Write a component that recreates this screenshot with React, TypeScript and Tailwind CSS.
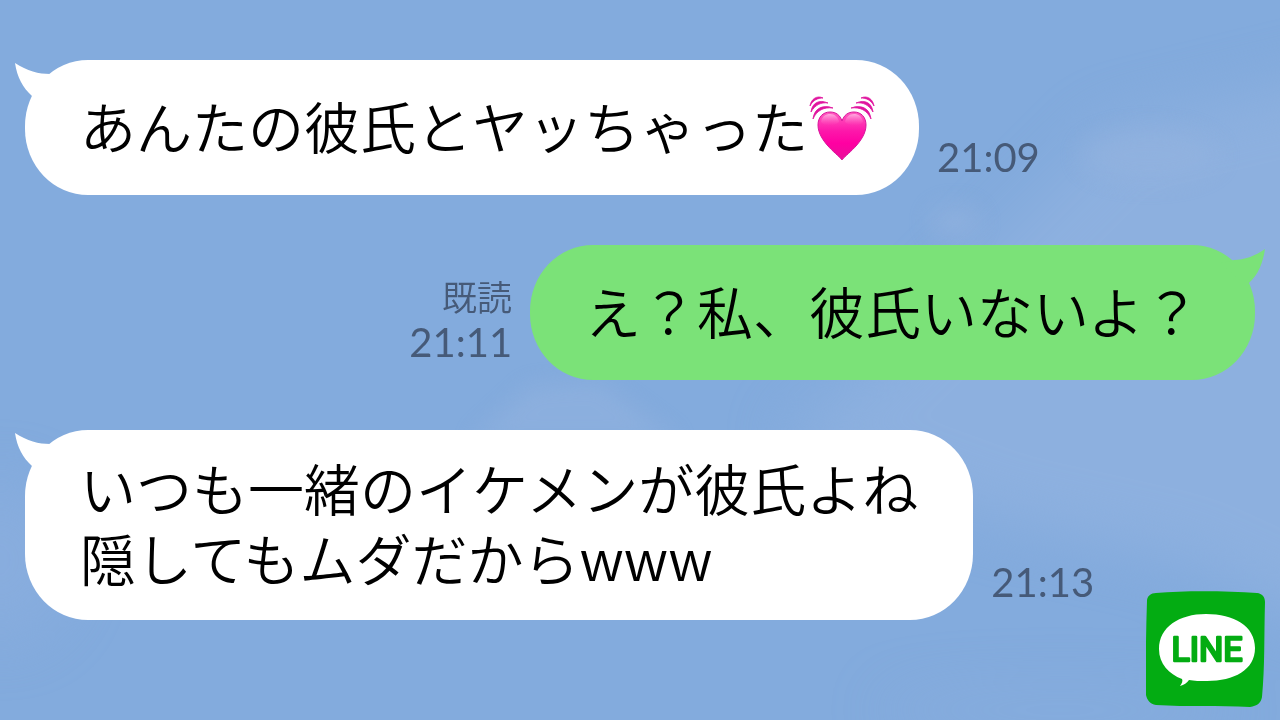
import React from 'react';

type Message = {
  id: number;
  mine: boolean;
  text: string;
  time: string;
  read?: boolean;
  heart?: boolean;
};

const messages: Message[] = [
  { id: 1, mine: false, text: 'あんたの彼氏とヤッちゃった', time: '21:09', heart: true },
  { id: 2, mine: true, text: 'え？私、彼氏いないよ？', time: '21:11', read: true },
  { id: 3, mine: false, text: 'いつも一緒のイケメンが彼氏よね\n隠してもムダだからwww', time: '21:13' },
];

const Sky: React.FC = () => (
  <svg
    className="absolute inset-0 w-full h-full"
    viewBox="0 0 1280 720"
    preserveAspectRatio="none"
    aria-hidden="true"
  >
    <defs>
      <filter id="soft" x="-50%" y="-50%" width="200%" height="200%" colorInterpolationFilters="sRGB">
        <feGaussianBlur stdDeviation="28" />
      </filter>
      <filter id="wisp" x="-50%" y="-50%" width="200%" height="200%" colorInterpolationFilters="sRGB">
        <feGaussianBlur stdDeviation="10" />
      </filter>
    </defs>
    <g fill="#8db0df" filter="url(#soft)">
      <path d="M1010 230 L1110 130 L1400 60 L1400 660 L1180 560 L1000 520 L780 440 L880 360 Z" />
      <ellipse cx="0" cy="560" rx="70" ry="80" opacity="0.5" />
      <ellipse cx="1060" cy="710" rx="180" ry="20" opacity="0.4" />
    </g>
    <g fill="#94b3df" filter="url(#wisp)" opacity="0.5">
      <ellipse cx="955" cy="222" rx="26" ry="18" />
      <ellipse cx="1150" cy="155" rx="70" ry="28" />
      <path d="M470 440 L530 385 L600 380 L680 440 Z" />
    </g>
  </svg>
);

const BeatingHeart: React.FC = () => (
  <svg
    className="w-14 h-[70px] shrink-0 overflow-visible"
    viewBox="0 -3 56 70"
    role="img"
    aria-label="💓"
  >
    <defs>
      <linearGradient id="heartFill" x1="0" y1="0" x2="0" y2="1">
        <stop offset="0" stopColor="#ff5cc0" />
        <stop offset="0.4" stopColor="#fd17aa" />
        <stop offset="0.65" stopColor="#ff00a2" />
        <stop offset="1" stopColor="#e8109a" />
      </linearGradient>
      <linearGradient id="heartShine" x1="0" y1="0" x2="0" y2="1">
        <stop offset="0" stopColor="#ffb5e4" stopOpacity="0.9" />
        <stop offset="1" stopColor="#ff5cc0" stopOpacity="0" />
      </linearGradient>
    </defs>
    <path
      d="M34 67 C32 63 10 49 10 32 C10 24 15 19 22 19 C28 19 32 22 34 28 C36 22 40 19 46 19 C53 19 58 24 58 32 C58 49 36 63 34 67 Z"
      fill="url(#heartFill)"
      stroke="#d9149b"
      strokeWidth="1"
    />
    <path d="M13 29 C14 23 18 21 22 21 C27 21 30 24 31 29 C26 33 17 34 13 29 Z" fill="url(#heartShine)" />
    <path d="M55 29 C54 23 50 21 46 21 C41 21 38 24 37 29 C42 33 51 34 55 29 Z" fill="url(#heartShine)" />
    <g fill="#e0149e" stroke="#e0149e" strokeWidth="0.8" strokeLinejoin="round">
      <path d="M2 13 C3 6 9 2 15 5 C10 5 5 7 2 13 Z" />
      <path d="M3 19 C4 10 11 6 20 10 C13 9 7 12 3 19 Z" />
      <path d="M5 26 C6 16 14 11 25 15 C16 14 9 17 5 26 Z" />
      <path d="M66 13 C65 6 59 2 53 5 C58 5 63 7 66 13 Z" />
      <path d="M65 19 C64 10 57 6 48 10 C55 9 61 12 65 19 Z" />
      <path d="M63 26 C62 16 54 11 43 15 C52 14 59 17 63 26 Z" />
    </g>
  </svg>
);

const Tail: React.FC<{ mine: boolean }> = ({ mine }) =>
  mine ? (
    <svg className="absolute top-1 -right-[10px] w-12 h-9" viewBox="0 0 48 36" aria-hidden="true">
      <path d="M48 0 C38 7 27 11 17 11 L4 14 L28 36 L32 34 C41 26 46 14 48 0 Z" fill="#7be278" />
    </svg>
  ) : (
    <svg className="absolute top-[3px] -left-[10px] w-12 h-9" viewBox="0 0 48 36" aria-hidden="true">
      <path d="M0 0 C12 8 24 11 35 11 L46 14 L20 36 L17 33 C8 25 2 14 0 0 Z" fill="#fff" />
    </svg>
  );

const LineLogo: React.FC = () => (
  <svg
    className="absolute right-[15px] bottom-[13px] w-[119px] h-[116px]"
    viewBox="0 0 119 116"
    role="img"
    aria-label="LINE"
  >
    <path
      d="M10 2 C40 -0.500 80 0 111 2 C116 2.500 119 6 119 11 C118 45 119 75 116 106 C115 112 111 115 104 116 C72 114 42 116 10 114 C4 113 1 109 0 104 C-0.500 72 0 40 1 10 C1 5 5 2 10 2 Z"
      fill="#03ac12"
    />
    <path
      d="M60 23 C88 23 109 35 109 57 C109 79 88 90 61 90 C54 90 48 90 43 89 C41 92 38 94 34 95 C36 92 37 90 36 88 C23 83 13 73 13 58 C13 36 33 23 60 23 Z"
      fill="#fff"
    />
    <text
      x="61"
      y="70"
      textAnchor="middle"
      fontFamily="Roboto, sans-serif"
      fontWeight="400"
      fontSize="34"
      fill="#03ac12"
      stroke="#03ac12"
      strokeWidth="2.5"
      strokeLinejoin="round"
    >
      LINE
    </text>
  </svg>
);

const Bubble: React.FC<{ message: Message }> = ({ message }) => (
  <div
    className={`relative flex items-center min-h-[135px] px-[55px] pt-[22px] pb-[28px] rounded-[63px/66px] text-[56px] leading-[70px] text-black ${
      message.mine ? 'bg-[#7be278]' : 'bg-white'
    }`}
  >
    <Tail mine={message.mine} />
    <p className="font-[350] whitespace-pre-line">{message.text}</p>
    {message.heart && <BeatingHeart />}
  </div>
);

const App: React.FC = () => {
  return (
    <main
      className={`relative min-h-screen overflow-hidden bg-[#83abdd] font-["Noto_Sans_CJK_JP",sans-serif]`}
      lang="ja"
    >
      <Sky />
      <ol className="relative flex flex-col gap-[50px] px-[25px] pt-[60px] pb-[100px]">
        {messages.map((message) => (
          <li
            key={message.id}
            className={`flex items-end gap-[18px] ${message.mine ? 'flex-row-reverse' : ''}`}
          >
            <Bubble message={message} />
            <div className="flex flex-col items-end pb-[15px] leading-[46px] text-[#465a78]">
              {message.read && <span className="text-[35px] font-[350]">既読</span>}
              <time className={`text-[40px] font-["Lato",sans-serif]`}>{message.time}</time>
            </div>
          </li>
        ))}
      </ol>
      <LineLogo />
    </main>
  );
};

export default App;
